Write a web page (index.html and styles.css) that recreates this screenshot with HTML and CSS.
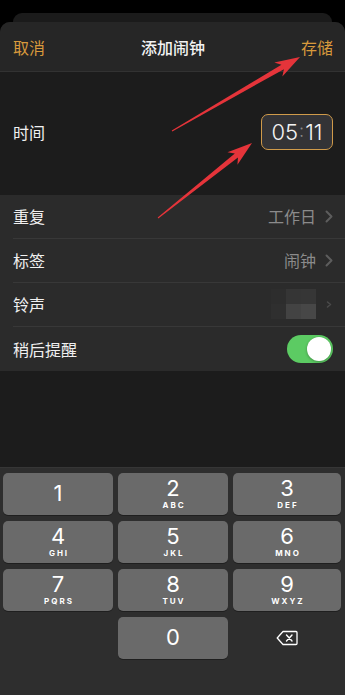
FILE: index.html
```html
<!DOCTYPE html>
<html lang="zh">
<head>
<meta charset="utf-8">
<title>添加闹钟</title>
<link rel="stylesheet" href="styles.css">
</head>
<body>
<div class="screen">
  <div class="backsheet"></div>
  <div class="sheet">
    <header class="header">
      <span class="hbtn">取消</span>
      <span class="htitle">添加闹钟</span>
      <span class="hbtn">存储</span>
    </header>
    <section class="time-section">
      <span class="label">时间</span>
      <div class="timebox"><span>05</span><span class="colon">:</span><span>11</span></div>
    </section>
    <section class="list">
      <div class="row">
        <span class="label">重复</span>
        <span class="value">工作日<svg class="chev" viewBox="0 0 8 13" width="8" height="13"><path d="M1.5 1.5 L6.5 6.5 L1.5 11.5" fill="none" stroke="#5d5d5d" stroke-width="2" stroke-linecap="round" stroke-linejoin="round"/></svg></span>
      </div>
      <div class="row">
        <span class="label">标签</span>
        <span class="value">闹钟<svg class="chev" viewBox="0 0 8 13" width="8" height="13"><path d="M1.5 1.5 L6.5 6.5 L1.5 11.5" fill="none" stroke="#5d5d5d" stroke-width="2" stroke-linecap="round" stroke-linejoin="round"/></svg></span>
      </div>
      <div class="row">
        <span class="label">铃声</span>
        <span class="value">
          <span class="mosaic">
            <i class="m1"></i><i class="m2"></i><i class="m3"></i>
            <i class="m4"></i><i class="m5"></i><i class="m6"></i>
          </span>
          <svg class="chev" viewBox="0 0 8 13" width="8" height="13"><path d="M2.5 4 L5.5 6.5 L2.5 9" fill="none" stroke="#4a4a4a" stroke-width="1.6" stroke-linecap="round" stroke-linejoin="round"/></svg>
        </span>
      </div>
      <div class="row last">
        <span class="label">稍后提醒</span>
        <span class="toggle"><span class="knob"></span></span>
      </div>
    </section>
    <div class="spacer"></div>
    <section class="keyboard">
      <div class="key"><span class="num">1</span></div>
      <div class="key"><span class="num">2</span><span class="let">ABC</span></div>
      <div class="key"><span class="num">3</span><span class="let">DEF</span></div>
      <div class="key"><span class="num">4</span><span class="let">GHI</span></div>
      <div class="key"><span class="num">5</span><span class="let">JKL</span></div>
      <div class="key"><span class="num">6</span><span class="let">MNO</span></div>
      <div class="key"><span class="num">7</span><span class="let">PQRS</span></div>
      <div class="key"><span class="num">8</span><span class="let">TUV</span></div>
      <div class="key"><span class="num">9</span><span class="let">WXYZ</span></div>
      <div class="key blank"></div>
      <div class="key zero"><span class="num">0</span></div>
      <div class="key del">
        <svg viewBox="0 0 22 16" width="22" height="16"><path d="M7 1.5 H20 A1 1 0 0 1 21 2.5 V13.5 A1 1 0 0 1 20 14.5 H7 L1.2 8 Z" fill="none" stroke="#ffffff" stroke-width="1.3" stroke-linejoin="round"/><path d="M10.5 5 L16 11 M16 5 L10.5 11" stroke="#ffffff" stroke-width="1.4" stroke-linecap="round"/></svg>
      </div>
    </section>
  </div>
  <svg class="arrows" viewBox="0 0 345 695" width="345" height="695">
    <polygon fill="#e5343a" points="172.25,131.43 283.93,69.17 282.35,76.43 300,57 274.35,62.57 281.43,64.83 171.75,130.57"/>
    <polygon fill="#e5343a" points="158.31,218.39 237.94,157.42 237.45,164.83 252,143 227.49,152.33 234.82,153.52 157.69,217.61"/>
  </svg>
</div>
</body>
</html>
```
FILE: styles.css
```css
* { box-sizing: border-box; }
html, body { margin: 0; padding: 0; background: #000; }
body {
  font-family: "Noto Sans CJK SC", "Noto Sans", sans-serif;
  color: #fff;
}
.screen {
  position: relative;
  width: 345px;
  height: 695px;
  display: flex;
  flex-direction: column;
  padding-top: 13px;
  overflow: hidden;
}
.backsheet {
  height: 9px;
  margin: 0 13px;
  background: #1b1b1b;
  border-radius: 9px 9px 0 0;
}
.sheet {
  flex: 1;
  display: flex;
  flex-direction: column;
  background: #1c1c1c;
  border-radius: 10px 10px 0 0;
  overflow: hidden;
}
.header {
  height: 50px;
  flex: none;
  display: flex;
  align-items: center;
  justify-content: space-between;
  padding: 0 12px 0 13px;
  background: #262626;
  border-bottom: 1px solid #323232;
  font-size: 16px;
}
.hbtn { color: #d99a3c; }
.htitle { color: #f2f2f2; font-weight: 500; }
.time-section {
  height: 123px;
  flex: none;
  display: flex;
  align-items: center;
  justify-content: space-between;
  padding: 0 12px 4px 13px;
}
.label { font-size: 16px; color: #f0f0f0; }
.timebox {
  width: 72px;
  height: 36px;
  border: 1.5px solid #cf9a4a;
  border-radius: 7px;
  background: #333336;
  display: flex;
  align-items: center;
  justify-content: center;
  font-family: "Inter", "Liberation Sans", sans-serif;
  font-size: 22px;
  font-weight: 300;
  color: #f4f4f4;
}
.colon { color: #8a8a8a; margin: 0 1px 2px; font-size: 18px; }
.list {
  flex: none;
  background: #2b2b2b;
  padding-left: 13px;
}
.row {
  height: 44px;
  display: flex;
  align-items: center;
  justify-content: space-between;
  padding-right: 12px;
  padding-bottom: 1px;
  border-bottom: 1px solid #383838;
}
.row.last { border-bottom: none; }
.value {
  display: flex;
  align-items: center;
  gap: 9px;
  font-size: 16px;
  color: #8b8b8b;
}
.chev { display: block; }
.mosaic {
  display: grid;
  grid-template-columns: 15px 15px 15px;
  grid-template-rows: 15px 15px;
}
.mosaic i { display: block; }
.m1 { background: #2d2d2d; }
.m2 { background: #353535; }
.m3 { background: #363636; }
.m4 { background: #2f2f2f; }
.m5 { background: #434343; }
.m6 { background: #474747; }
.toggle {
  width: 46px;
  height: 28px;
  border-radius: 14px;
  background: #5ccb63;
  display: flex;
  align-items: center;
  justify-content: flex-end;
  padding: 2px;
}
.knob {
  width: 24px;
  height: 24px;
  border-radius: 50%;
  background: #fff;
  box-shadow: 0 1px 3px rgba(0,0,0,0.3);
}
.spacer { flex: 1; }
.keyboard {
  height: 228px;
  flex: none;
  background: #2e2e2e;
  border-top: 1px solid #363636;
  padding: 5px 4px 0 3px;
  display: grid;
  grid-template-columns: 110px 110px 1fr;
  grid-template-rows: repeat(4, 42px);
  column-gap: 5px;
  row-gap: 6px;
  align-content: start;
}
.key {
  background: #6a6a6a;
  border-radius: 5px;
  box-shadow: 0 1px 0 #1f1f1f;
  display: flex;
  flex-direction: column;
  align-items: center;
  justify-content: center;
  font-family: "Inter", "Liberation Sans", sans-serif;
  color: #fff;
}
.num { font-size: 22px; line-height: 22px; font-weight: 400; margin-top: -2px; }
.let { font-size: 8px; font-weight: 700; letter-spacing: 2px; margin-left: 2px; line-height: 10px; margin-top: 1px; }
.key.blank, .key.del { background: transparent; box-shadow: none; }
.key.del svg { display: block; }
.arrows {
  position: absolute;
  top: 0;
  left: 0;
  pointer-events: none;
}
```
